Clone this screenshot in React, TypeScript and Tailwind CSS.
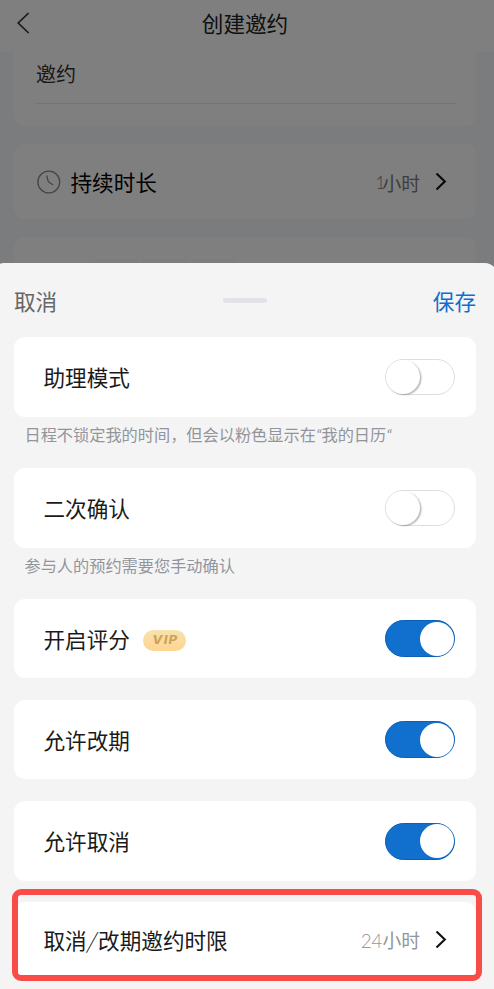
import { clsx } from "clsx";

interface SwitchProps {
  checked?: boolean;
}

function Switch({ checked = false }: SwitchProps) {
  return (
    <button
      role="switch"
      aria-checked={checked}
      className={clsx(
        "flex w-[70px] items-center rounded-full border",
        checked ? "h-[37px] justify-end border-[#0b60b5] bg-[#116fce]" : "h-[36px] justify-start border-[#dedede] bg-white"
      )}
    >
      <span
        className={clsx(
          "rounded-full bg-white",
          checked ? "size-[34px]" : "size-[34px] shadow-[1.5px_1px_1.5px_rgba(0,0,0,0.28)]"
        )}
      />
    </button>
  );
}

function ChevronIcon() {
  return (
    <svg className="h-[18px] w-3" viewBox="0 0 12 18" fill="none" stroke="#111" strokeWidth="2.1">
      <path d="M1.5 .5 9.8 8.5 1.5 16.5" />
    </svg>
  );
}

function VipBadge() {
  return (
    <span className="ml-[13.5px] mt-[3px] flex h-[21px] w-[43px] items-center justify-center rounded-full bg-linear-to-b from-[#f7e2ad] to-[#ffd591]">
      <span className="scale-x-[1.15] pt-0.5 font-['Inter'] text-[11.5px] font-extrabold italic leading-none tracking-[1px] text-[#cda45c]">
        VIP
      </span>
    </span>
  );
}

interface SettingCardProps {
  label: string;
  checked: boolean;
  vip?: boolean;
  className: string;
}

function SettingCard({ label, checked, vip, className }: SettingCardProps) {
  return (
    <div className={clsx("flex items-center rounded-[11px] bg-white pl-[29.5px] pr-[21px]", className)}>
      <span>{label}</span>
      {vip && <VipBadge />}
      <div className="ml-auto">
        <Switch checked={checked} />
      </div>
    </div>
  );
}

function Page() {
  return (
    <div className="h-full bg-[#f6f8fb]">
      <header className="relative flex h-[52px] items-center justify-center bg-white pr-[4px]">
        <svg
          className="absolute left-4 top-3 h-[22px] w-[14px]"
          viewBox="0 0 14 22"
          fill="none"
          stroke="#333"
          strokeWidth="1.7"
        >
          <path d="M12.6 1 2.2 11l10.4 10" />
        </svg>
        <h1 className="-mt-[7px] text-[#222]">创建邀约</h1>
      </header>

      <div className="ml-[14px] mr-[18px] h-[74px] rounded-b-[11px] bg-white pl-[21px] pr-[20px]">
        <div className="flex h-[52px] items-center border-b border-[#e8e9ec] pb-[7px] pl-px text-[20px] text-[#333]">
          邀约
        </div>
      </div>

      <div className="ml-[14px] mr-[18px] mt-[18px] flex h-[75px] items-center rounded-[11px] bg-white pl-[23px] pr-[29px]">
        <svg className="h-6 w-6" viewBox="0 0 24 24" fill="none" stroke="#888b92" strokeWidth="1.3">
          <circle cx="11.8" cy="12" r="10.9" />
          <path d="M9.8 5.4 11 10.8 11.8 12 16.2 15" />
        </svg>
        <span className="ml-[9.5px] text-black">持续时长</span>
        <span className="ml-auto mr-[15px] flex pt-[2px] text-[18.8px] text-[#777b82]">
          <span className="font-['Lato'] text-[17px] font-light tracking-[-3px]">1</span>
          <span>小时</span>
        </span>
        <ChevronIcon />
      </div>

      <div className="ml-[14px] mr-[18px] mt-[18px] h-[60px] rounded-t-[11px] bg-white pl-[77px] pt-[22px]">
        <div className="flex gap-[3px]">
          <div className="h-8 w-[48px] rounded-tl-lg bg-[#fafbff]" />
          <div className="h-8 w-[47px] bg-[#fafbff]" />
          <div className="h-8 w-[48px] rounded-tr-lg bg-[#fafbff]" />
        </div>
      </div>
    </div>
  );
}

export default function App() {
  return (
    <div
      lang="zh-CN"
      className="relative h-[989px] w-[494px] overflow-hidden font-['Noto_Sans_CJK_SC',sans-serif] text-[21.6px] leading-[32px] text-[#1a1a1a]"
    >
      <Page />
      <div className="absolute inset-0 bg-black/50" />

      {/* Bottom sheet, slightly wider than the screen */}
      <section className="absolute -left-2 -right-[3px] bottom-0 top-[263px] rounded-t-[12px] bg-[#f4f4f4] pl-[22px] pr-[21px]">
        <div className="flex h-[74px] items-center justify-between pt-[2px]">
          <button className="text-[#666]">取消</button>
          <span className="mb-px h-[5px] w-[44px] rounded-full bg-[#e2e2e7]" />
          <button className="text-[#116fce]">保存</button>
        </div>

        <SettingCard label="助理模式" checked={false} className="h-[80px]" />
        <p className="h-[51px] whitespace-nowrap pl-[10.5px] pt-px text-[16.2px] text-[#92959c]">
          日程不锁定我的时间，但会以粉色显示在
          <span className="font-['Lato'] italic">“</span>我的日历<span className="font-['Lato'] italic">“</span>
        </p>
        <SettingCard label="二次确认" checked={false} className="h-[80px]" />
        <p className="h-[51px] whitespace-nowrap pl-[10.5px] pt-px text-[16.2px] text-[#92959c]">
          参与人的预约需要您手动确认
        </p>
        <SettingCard label="开启评分" checked vip className="h-[79px]" />
        <SettingCard label="允许改期" checked className="mt-[22px] h-[79px]" />
        <SettingCard label="允许取消" checked className="mt-[22px] h-[80px]" />

        <div className="mt-[21px] flex h-[76px] items-center rounded-[11px] bg-white pl-[29.5px] pr-[29px]">
          <span>
            取消<span className="inline-block w-[11.4px] origin-center skew-x-[-12deg] text-center font-light">/</span>改期邀约时限
          </span>
          <span className="ml-auto mr-[15px] text-[18.8px] text-[#92959c]">
            <span className="font-['Lato'] font-light">24</span>小时
          </span>
          <ChevronIcon />
        </div>
      </section>

      {/* Highlight frame around the time limit row */}
      <div className="absolute left-[12px] top-[889px] h-[92px] w-[470px] rounded-[9px] border-[6px] border-[#f94b47]" />
    </div>
  );
}
